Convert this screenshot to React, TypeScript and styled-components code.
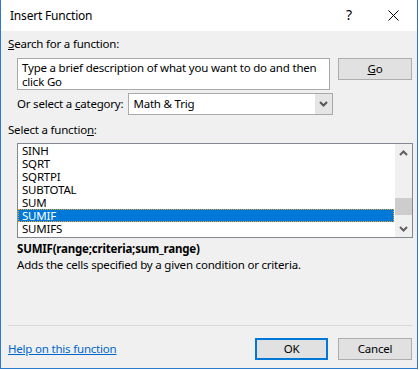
import { VFC, memo } from 'react';
import styled, { createGlobalStyle } from 'styled-components';

const GlobalStyle = createGlobalStyle`
  html, body {
    margin: 0;
    padding: 0;
    background: #ffffff;
  }
  body {
    font-family: 'Noto Sans', 'Segoe UI', sans-serif;
    font-size: 11.5px;
    letter-spacing: -0.2px;
    line-height: 16px;
    color: #000;
  }
`;

const functions = ['SINH', 'SQRT', 'SQRTPI', 'SUBTOTAL', 'SUM', 'SUMIF', 'SUMIFS'];

const Chevron: VFC<{ up?: boolean; color?: string }> = ({ up, color = '#606060' }) => (
  <svg width="9" height="6" viewBox="0 0 9 6">
    <path d={up ? 'M1 5 L4.5 1.5 L8 5' : 'M1 1 L4.5 4.5 L8 1'} fill="none" stroke={color} strokeWidth="2" />
  </svg>
);

const App: VFC = memo(() => {
  return (
    <>
      <GlobalStyle />
      <Dialog>
        <TitleBar>
          <Title>Insert Function</Title>
          <HelpMark>?</HelpMark>
          <CloseIcon>
            <svg width="11" height="11" viewBox="0 0 11 11">
              <path d="M0.5 0.5 L10.5 10.5 M10.5 0.5 L0.5 10.5" stroke="#000" strokeWidth="1" />
            </svg>
          </CloseIcon>
        </TitleBar>
        <Body>
          <Label>
            <u>S</u>earch for a function:
          </Label>
          <SearchRow>
            <SearchBox>Type a brief description of what you want to do and then click Go</SearchBox>
            <Button>
              <u>G</u>o
            </Button>
          </SearchRow>
          <CategoryRow>
            <span>
              Or select a <u>c</u>ategory:
            </span>
            <Select>
              <span>Math &amp; Trig</span>
              <DropArrow>
                <Chevron color="#555" />
              </DropArrow>
            </Select>
          </CategoryRow>
          <FunctionLabel>
            Select a functio<u>n</u>:
          </FunctionLabel>
          <ListBox>
            <Items>
              {functions.map((name) => (
                <Item key={name} $selected={name === 'SUMIF'}>
                  {name}
                </Item>
              ))}
            </Items>
            <Scrollbar>
              <ScrollArrow>
                <Chevron up />
              </ScrollArrow>
              <Track>
                <Thumb />
              </Track>
              <ScrollArrow>
                <Chevron />
              </ScrollArrow>
            </Scrollbar>
          </ListBox>
          <Syntax>SUMIF(range;criteria;sum_range)</Syntax>
          <Description>Adds the cells specified by a given condition or criteria.</Description>
          <Separator />
          <Footer>
            <HelpLink>Help on this function</HelpLink>
            <Button $default>OK</Button>
            <Button>Cancel</Button>
          </Footer>
        </Body>
      </Dialog>
    </>
  );
});

export default App;

const Dialog = styled.div`
  box-sizing: border-box;
  width: 418px;
  height: 369px;
  border: 1px solid #2b79d0;
  border-top: none;
  background: #f0f0f0;
  display: flex;
  flex-direction: column;
`;

const TitleBar = styled.div`
  height: 31px;
  flex: none;
  background: #fff;
  display: flex;
  align-items: center;
  padding-left: 9px;
  font-size: 12px;
`;

const Title = styled.div`
  flex: 1;
  padding-top: 1px;
`;

const HelpMark = styled.div`
  width: 10px;
  font-size: 14px;
  margin-right: 32px;
  padding-bottom: 1px;
`;

const CloseIcon = styled.div`
  width: 11px;
  height: 11px;
  margin-right: 18px;
  display: flex;
`;

const Body = styled.div`
  flex: 1;
  display: flex;
  flex-direction: column;
  padding: 5px 5px 0 7px;
`;

const Label = styled.div`
  height: 16px;
`;

const SearchRow = styled.div`
  display: flex;
  align-items: flex-start;
  margin: 6px 0 0 9px;
  gap: 8px;
`;

const SearchBox = styled.div`
  box-sizing: border-box;
  width: 313px;
  height: 32px;
  background: #fff;
  border: 1px solid #a9a9a9;
  padding: 2px 4px 0;
  line-height: 14px;
`;

const Button = styled.div<{ $default?: boolean }>`
  box-sizing: border-box;
  width: ${(p) => (p.$default ? '73px' : '74px')};
  height: 22px;
  background: #e1e1e1;
  border: ${(p) => (p.$default ? '2px solid #0078d7' : '1px solid #adadad')};
  display: flex;
  align-items: center;
  justify-content: center;
`;

const CategoryRow = styled.div`
  display: flex;
  align-items: center;
  margin: 3px 0 0 9px;
  gap: 5px;
`;

const Select = styled.div`
  box-sizing: border-box;
  width: 205px;
  height: 22px;
  background: #fff;
  border: 1px solid #a9a9a9;
  display: flex;
  align-items: center;
  padding-left: 4px;
  span {
    flex: 1;
  }
`;

const DropArrow = styled.div`
  width: 17px;
  height: 20px;
  background: #e5e5e5;
  display: flex;
  align-items: center;
  justify-content: center;
`;

const FunctionLabel = styled.div`
  height: 16px;
  margin-top: 7px;
`;

const ListBox = styled.div`
  box-sizing: border-box;
  width: 396px;
  height: 95px;
  margin: 5px 0 0 9px;
  border: 1px solid #828790;
  background: #fff;
  display: flex;
`;

const Items = styled.div`
  flex: 1;
  display: flex;
  flex-direction: column;
`;

const Item = styled.div<{ $selected?: boolean }>`
  box-sizing: border-box;
  height: 13px;
  line-height: 13px;
  padding-left: 4px;
  overflow: hidden;
  background: ${(p) => (p.$selected ? '#0078d7' : 'transparent')};
  color: ${(p) => (p.$selected ? '#fff' : '#000')};
  outline: ${(p) => (p.$selected ? '1px dotted #f0a030' : 'none')};
  outline-offset: -1px;
`;

const Scrollbar = styled.div`
  width: 17px;
  margin-left: 1px;
  background: #f0f0f0;
  display: flex;
  flex-direction: column;
`;

const ScrollArrow = styled.div`
  height: 17px;
  display: flex;
  align-items: center;
  justify-content: center;
`;

const Track = styled.div`
  flex: 1;
  display: flex;
  flex-direction: column;
  justify-content: flex-end;
  padding-bottom: 5px;
`;

const Thumb = styled.div`
  height: 17px;
  background: #cdcdcd;
`;

const Syntax = styled.div`
  margin: 3px 0 0 9px;
  font-weight: bold;
`;

const Description = styled.div`
  margin-left: 9px;
`;

const Separator = styled.div`
  height: 1px;
  width: 404px;
  background: #d9d9d9;
  margin-top: 52px;
`;

const Footer = styled.div`
  display: flex;
  align-items: center;
  margin-top: 12px;
  gap: 10px;
`;

const HelpLink = styled.div`
  flex: 1;
  color: #0066cc;
  text-decoration: underline;
`;
